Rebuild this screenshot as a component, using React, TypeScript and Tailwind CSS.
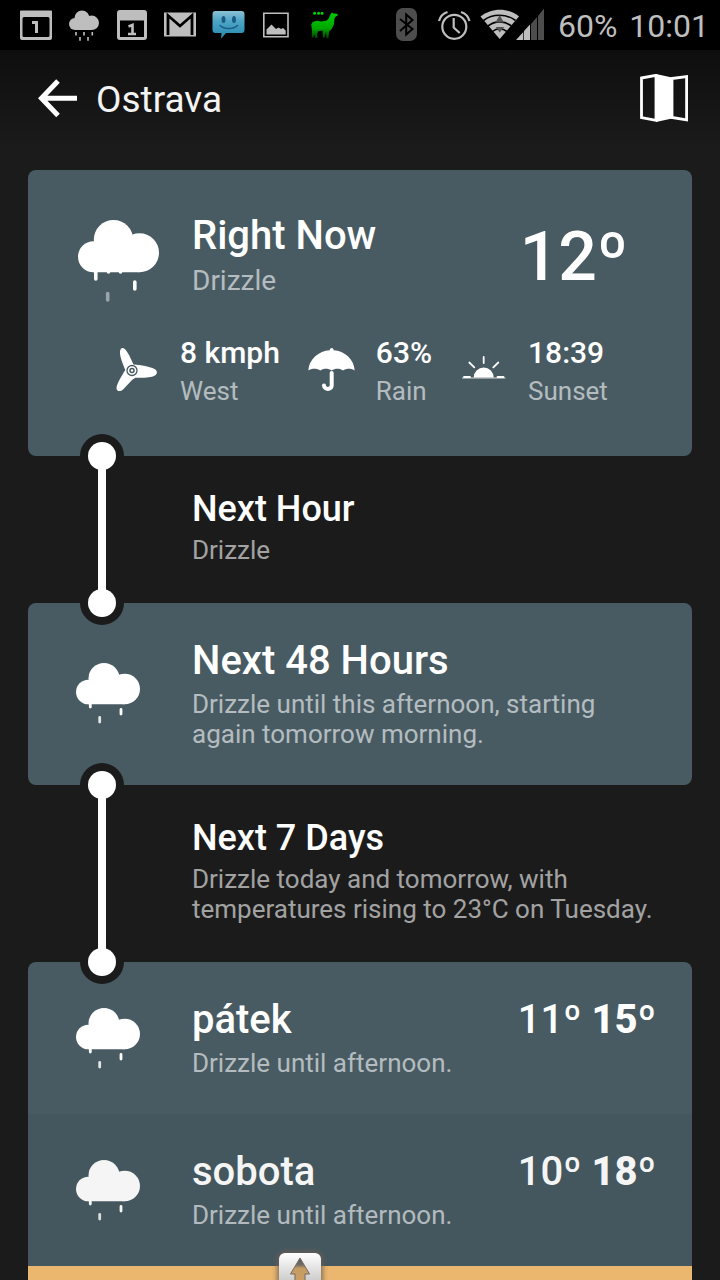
import type { ReactNode } from "react";

const days = [
  {
    name: "pátek",
    summary: "Drizzle until afternoon.",
    low: 11,
    high: 15,
    row: "bg-[#485b63] text-white",
  },
  {
    name: "sobota",
    summary: "Drizzle until afternoon.",
    low: 10,
    high: 18,
    row: "bg-[#44575f] text-[#f5f5f5]",
  },
];

function StatusBar() {
  return (
    <div className="flex h-[50px] items-center justify-between bg-black pl-3 pr-[11px] text-[#bebebe]">
      <div className="flex">
        <svg className="h-[50px] w-12" viewBox="0 0 48 50">
          <path
            fill="currentColor"
            fillRule="evenodd"
            d="M9 10.5h30a1 1 0 0 1 1 1V38a2 2 0 0 1-2 2H10a2 2 0 0 1-2-2V11.500a1 1 0 0 1 1-1zM12 17a1.500 1.500 0 0 0-1.500 1.500v17A1.500 1.500 0 0 0 12 37h24a1.500 1.500 0 0 0 1.500-1.500v-17A1.500 1.500 0 0 0 36 17z"
          />
          <path fill="none" stroke="currentColor" strokeWidth="3" d="M20 22.500h4.500V33" />
        </svg>
        <svg className="h-[50px] w-12" viewBox="0 0 48 50" fill="currentColor">
          <circle cx="15" cy="24" r="6" />
          <circle cx="22" cy="18" r="7.500" />
          <circle cx="31.700" cy="22.800" r="7.300" />
          <path d="M15 20h17v10H15z" />
          <path
            stroke="currentColor"
            strokeWidth="1.600"
            d="M16 32v3.500M24 32v3.500M32.300 32v3.500M20 37v3.700M28 37v3.700"
          />
        </svg>
        <svg className="h-[50px] w-12" viewBox="0 0 48 50">
          <path
            fill="currentColor"
            fillRule="evenodd"
            d="M12 10h24a3 3 0 0 1 3 3v24a3 3 0 0 1-3 3H12a3 3 0 0 1-3-3V13a3 3 0 0 1 3-3zM12 20.500V37h24V20.500z"
          />
          <path
            fill="none"
            stroke="currentColor"
            strokeWidth="2.600"
            d="M20.500 26.500l4-1.500v9M20 34h8"
          />
        </svg>
        <svg className="h-[50px] w-12" viewBox="0 0 48 50">
          <path fill="currentColor" d="M8 12.500h32v24H8z" />
          <path
            fill="none"
            stroke="#000"
            strokeWidth="2.800"
            d="M12 35V15.500l12 10.500 12-10.500V35"
          />
        </svg>
        <svg className="h-[50px] w-12" viewBox="0 0 48 50">
          <defs>
            <linearGradient id="bubble" x1="0" y1="0" x2="0" y2="1">
              <stop offset="0" stopColor="#8cc0d2" />
              <stop offset="0.350" stopColor="#4fa6c6" />
              <stop offset="1" stopColor="#2389ae" />
            </linearGradient>
          </defs>
          <path
            fill="url(#bubble)"
            d="M11.500 11h26a3 3 0 0 1 3 3v16a3 3 0 0 1-3 3H22l-5 5.700L17.500 33h-6a3 3 0 0 1-3-3V14a3 3 0 0 1 3-3z"
          />
          <ellipse cx="19.500" cy="19.500" rx="2" ry="3.500" fill="#1d5a86" />
          <ellipse cx="30" cy="19.500" rx="2" ry="3.500" fill="#1d5a86" />
          <path
            fill="none"
            stroke="#1d5a86"
            strokeWidth="1.500"
            strokeLinecap="round"
            d="M16 25.500c4.500 4 13 4 17.500 0"
          />
        </svg>
        <svg className="h-[50px] w-12" viewBox="0 0 48 50">
          <path
            fill="none"
            stroke="currentColor"
            strokeWidth="1.600"
            d="M11.800 13.300h24.200v23.400H11.800z"
          />
          <path
            fill="currentColor"
            d="M14.500 34.500v-5l5-5 4.500 4.500 2.500-1.500 2.500 1.500 2-1 2.700 2.500v4z"
          />
        </svg>
        <svg className="h-[50px] w-12" viewBox="0 0 48 50">
          <defs>
            <linearGradient id="llama" x1="0" y1="0" x2="0" y2="1">
              <stop offset="0" stopColor="#00cc00" />
              <stop offset="0.600" stopColor="#00a800" />
              <stop offset="1" stopColor="#004400" />
            </linearGradient>
          </defs>
          <path
            fill="url(#llama)"
            d="M32 12.500l1.500 1 3.500.3 1 1.500-2.500 1.500-1 1.500-.5 6-2.500 5-2.500 2.500-.5 6.500h-2l-.5-6.500-1.500 6h-1.500l-.5-7-4 .2-1.500 3 .7 4h-2.200l-1.500-4-.5 3.500h-1.800l.3-7-.8-6 1.500-2.500 4-1.200 5 .8 5-1 2-2.200 1.500-3.500z"
          />
          <path
            stroke="#00d000"
            strokeWidth="3"
            strokeLinecap="round"
            d="M14.500 13.200h.1M18.500 13.200h.1M22 13.200h.1"
          />
        </svg>
      </div>
      <div className="flex items-center">
        <svg className="h-[50px] w-12" viewBox="0 0 48 50">
          <rect x="14" y="8" width="21" height="33" rx="7" fill="#4d4d4d" />
          <path
            fill="none"
            stroke="#000"
            strokeWidth="2"
            d="M18 19l12.500 10-6.300 5.500v-20l6.300 5.500L18 31"
          />
        </svg>
        <svg
          className="h-[50px] w-12"
          viewBox="0 0 48 50"
          fill="none"
          stroke="currentColor"
          strokeWidth="2.200"
        >
          <circle cx="24.300" cy="26.800" r="12" />
          <path d="M23.700 18v9.500l6 5.500" />
          <path d="M9 21c1-4 4-7.500 8.500-9M39.500 21c-1-4-4-7.500-8.500-9" />
        </svg>
        <svg className="mr-2 h-[50px] w-[72px]" viewBox="0 0 72 50">
          <path fill="currentColor" d="M21.700 39L2.500 16.500c11-9 28-9 38.500 0z" />
          <path
            fill="none"
            stroke="#000"
            strokeWidth="1.600"
            d="M5.500 20.500c9-7 23-7 32 0M10 26c7-5.500 16.500-5.500 23.500 0M14.500 31.500c4-3.500 10-3.500 14.500 0"
          />
          <path
            fill="#555"
            d="M21.700 15l4.200 7.500h-8.500zM17.700 27h8.500l-4.500 5.500z"
          />
          <path fill="currentColor" d="M38 40l7.300-8V40zM46 31l6-6.500V40h-6z" />
          <path fill="#4d4d4d" d="M53 24l6-7v23h-6zM60 16l6-7.500V40h-6z" />
        </svg>
        <p className="flex gap-3 pt-0.5 text-[32px] leading-[38px]">
          <span>60%</span>
          <span>10:01</span>
        </p>
      </div>
    </div>
  );
}

function Header() {
  return (
    <header className="flex h-[100px] items-center bg-linear-to-b from-[#0e0e0e] to-[#1b1b1b] pl-[38px] pr-8 text-white">
      <button type="button" aria-label="Back">
        <svg
          className="h-[52px] w-10"
          viewBox="0 0 40 52"
          fill="none"
          stroke="currentColor"
          strokeWidth="5"
        >
          <path d="M39 24.300H4M20 7L3.500 24.300 20 41.500" />
        </svg>
      </button>
      <h1 className="ml-[18px] text-[37px] leading-[42px] text-[#f3f3f3]">
        Ostrava
      </h1>
      <button type="button" aria-label="Map" className="ml-auto">
        <svg
          className="h-[52px] w-12"
          viewBox="0 0 48 52"
          fill="none"
          stroke="currentColor"
          strokeWidth="2.800"
        >
          <path d="M1.500 4L16 1.300v45L1.500 43.500z" />
          <path d="M32 4.500l14.600-2v43.300L32 43.500z" />
          <path fill="currentColor" stroke="none" d="M16 0l16 3.500v41L16 48z" />
        </svg>
      </button>
    </header>
  );
}

function LargeCloud() {
  return (
    <svg className="h-[84px] w-[82px]" viewBox="0 0 82 84" fill="currentColor">
      <circle cx="15.500" cy="36.700" r="15.500" />
      <circle cx="35.500" cy="19.700" r="19.700" />
      <circle cx="61.500" cy="32.700" r="19.500" />
      <path d="M15.500 24h46v28.200h-46z" />
      <g stroke="currentColor" strokeWidth="3.600" strokeLinecap="round">
        <path d="M17.800 50v9M56.800 62v7M30.500 51v1M42.500 51v1" />
        <path opacity="0.450" d="M29.700 73.500v6.500" />
      </g>
    </svg>
  );
}

function SmallCloud() {
  return (
    <svg className="h-[62px] w-16" viewBox="0 0 64 62" fill="currentColor">
      <circle cx="12.300" cy="29" r="12.300" />
      <circle cx="28" cy="15.500" r="15.500" />
      <circle cx="48.700" cy="26" r="15.300" />
      <path d="M12.300 18h36.400v23.300H12.300z" />
      <g stroke="currentColor" strokeWidth="2.800" strokeLinecap="round">
        <path d="M14.300 40v4M45 46.500v4.500" />
        <path opacity="0.850" d="M23.700 54.500v4.500" />
      </g>
    </svg>
  );
}

function WindIcon() {
  return (
    <svg className="size-12" viewBox="0 0 48 48">
      <path
        fill="currentColor"
        d="M13.300 23C10.500 16 7.500 9 8 4.500 8.500 1 10.500.2 12.500 1.800 16 5 18.500 11 21.500 17.500c7 .3 17 2 21.500 4.800 2.500 1.700 2.600 4.700 0 6.200-4.500 2.500-13 2.500-19.500 2.200C20 32 15 38.500 11 42.500c-2.500 2.300-6 2.300-6.500-1C4.500 37 9 30 13.300 23z"
      />
      <g fill="none" stroke="#485b63">
        <circle cx="20" cy="23.500" r="5" strokeWidth="1.300" />
        <circle cx="20" cy="23.500" r="2" strokeWidth="1.500" />
      </g>
    </svg>
  );
}

function UmbrellaIcon() {
  return (
    <svg className="size-12" viewBox="0 0 48 48">
      <path
        fill="currentColor"
        d="M.3 23.500C1 12 11 4 21.700 3.300c.3-3 3.700-3 4 0C36.500 4 46 12 46.700 23.500c-2.700-2.500-8.700-2.500-11.700 0-3-2.300-8-2.300-11.300 0-3.300-2.300-8.400-2.300-11.400 0-3-2.500-9-2.500-12 0z"
      />
      <path
        fill="none"
        stroke="currentColor"
        strokeWidth="4"
        strokeLinecap="round"
        d="M23.700 26v12.500c0 4.500-7.500 4.500-7.700 0"
      />
    </svg>
  );
}

function SunsetIcon() {
  return (
    <svg
      className="size-12"
      viewBox="0 0 48 48"
      fill="none"
      stroke="currentColor"
      strokeLinecap="round"
    >
      <path
        fill="currentColor"
        stroke="none"
        d="M13.700 30.500a10 10 0 0 1 20 0z"
      />
      <path strokeWidth="1" opacity="0.800" d="M2.500 31h42.500" />
      <path
        strokeWidth="1.800"
        d="M4 30h6M37.500 30h6M23.700 10v6M9.300 15.500l5 4.800M38.300 15.500l-5 4.800"
      />
    </svg>
  );
}

function Stat({
  icon,
  value,
  label,
}: {
  icon: ReactNode;
  value: string;
  label: string;
}) {
  return (
    <div className="flex items-center gap-5">
      {icon}
      <div>
        <p className="text-[30px] font-medium leading-9">{value}</p>
        <p className="mt-[5px] text-[26px] leading-[30px] text-white/60">
          {label}
        </p>
      </div>
    </div>
  );
}

function Outlook({ title, children }: { title: string; children: ReactNode }) {
  return (
    <section className="relative z-10 pb-[38px] pl-[164px] pr-4 pt-8">
      {/* timeline joining the cards above and below */}
      <div className="absolute -inset-y-[22px] left-[52px] w-11">
        <div className="absolute inset-x-0 top-0 h-11 rounded-full bg-[#1b1b1b]" />
        <div className="absolute inset-x-0 bottom-0 h-11 rounded-full bg-[#1b1b1b]" />
        <div className="absolute inset-y-[22px] left-[18px] w-2 bg-white" />
        <div className="absolute left-2 top-2 size-7 rounded-full bg-white" />
        <div className="absolute bottom-2 left-2 size-7 rounded-full bg-white" />
      </div>
      <h2 className="text-[36px] font-medium leading-[42px]">{title}</h2>
      <p className="mt-[5px] text-[26px] leading-[30px] text-white/60">
        {children}
      </p>
    </section>
  );
}

export default function App() {
  return (
    <div className="h-screen overflow-hidden bg-[#1b1b1b] font-[Roboto,sans-serif] text-white">
      <StatusBar />
      <Header />
      <main className="px-7 pt-5">
        <section className="rounded-lg bg-[#485b63] pb-[50px] pt-[42px]">
          <div className="flex pr-16">
            <div className="w-[164px] shrink-0 pl-[50px] pt-2">
              <LargeCloud />
            </div>
            <div className="grow">
              <h2 className="text-[40px] font-medium leading-[48px]">
                Right Now
              </h2>
              <p className="mt-[5px] text-[28px] leading-8 text-white/60">
                Drizzle
              </p>
            </div>
            <p className="mt-[5px] text-[68px] font-medium leading-[80px]">
              12º
            </p>
          </div>
          <div className="mt-[31px] flex gap-7 pl-[84px]">
            <Stat icon={<WindIcon />} value="8 kmph" label="West" />
            <Stat icon={<UmbrellaIcon />} value="63%" label="Rain" />
            <Stat icon={<SunsetIcon />} value="18:39" label="Sunset" />
          </div>
        </section>

        <Outlook title="Next Hour">Drizzle</Outlook>

        <section className="flex rounded-lg bg-[#485b63] pb-9 pr-9 pt-[34px]">
          <div className="w-[164px] shrink-0 pl-12 pt-[26px]">
            <SmallCloud />
          </div>
          <div>
            <h2 className="text-[40px] font-medium leading-[48px]">
              Next 48 Hours
            </h2>
            <p className="mt-1 text-[26px] leading-[30px] text-white/60">
              Drizzle until this afternoon, starting again tomorrow morning.
            </p>
          </div>
        </section>

        <Outlook title="Next 7 Days">
          Drizzle today and tomorrow, with temperatures rising to 23°C on
          Tuesday.
        </Outlook>

        <ul className="overflow-hidden rounded-t-lg">
          {days.map((day) => (
            <li key={day.name} className={`flex pb-9 pr-9 pt-[34px] ${day.row}`}>
              <div className="h-[82px] w-[164px] shrink-0 pl-12 pt-3">
                <SmallCloud />
              </div>
              <div className="grow">
                <h3 className="text-[40px] font-medium leading-[48px]">
                  {day.name}
                </h3>
                <p className="mt-1 text-[26px] leading-[30px] text-white/60">
                  {day.summary}
                </p>
              </div>
              <p className="text-[40px] font-medium leading-[48px]">
                {day.low}º <b className="font-extrabold">{day.high}º</b>
              </p>
            </li>
          ))}
        </ul>
        <div className="relative h-[152px] bg-[#ebb76e]">
          <button
            type="button"
            aria-label="Scroll up"
            className="absolute -top-[13px] left-[251px] h-11 w-[42px] rounded-md bg-linear-to-b from-white to-[#b0b0b0] shadow-[0_0_5px_2px_rgba(110,95,80,0.8)]"
          >
            <svg className="h-11 w-[42px]" viewBox="0 0 42 44">
              <defs>
                <linearGradient id="arrow" x1="0" y1="0" x2="0" y2="1">
                  <stop offset="0" stopColor="#4b5a60" />
                  <stop offset="0.200" stopColor="#6f6c66" />
                  <stop offset="0.300" stopColor="#c49b62" />
                  <stop offset="1" stopColor="#d0a263" />
                </linearGradient>
              </defs>
              <path
                fill="url(#arrow)"
                stroke="#77695a"
                strokeWidth="1"
                d="M21 5l9.500 16H26v18H16V21h-4.500z"
              />
            </svg>
          </button>
        </div>
      </main>
    </div>
  );
}
